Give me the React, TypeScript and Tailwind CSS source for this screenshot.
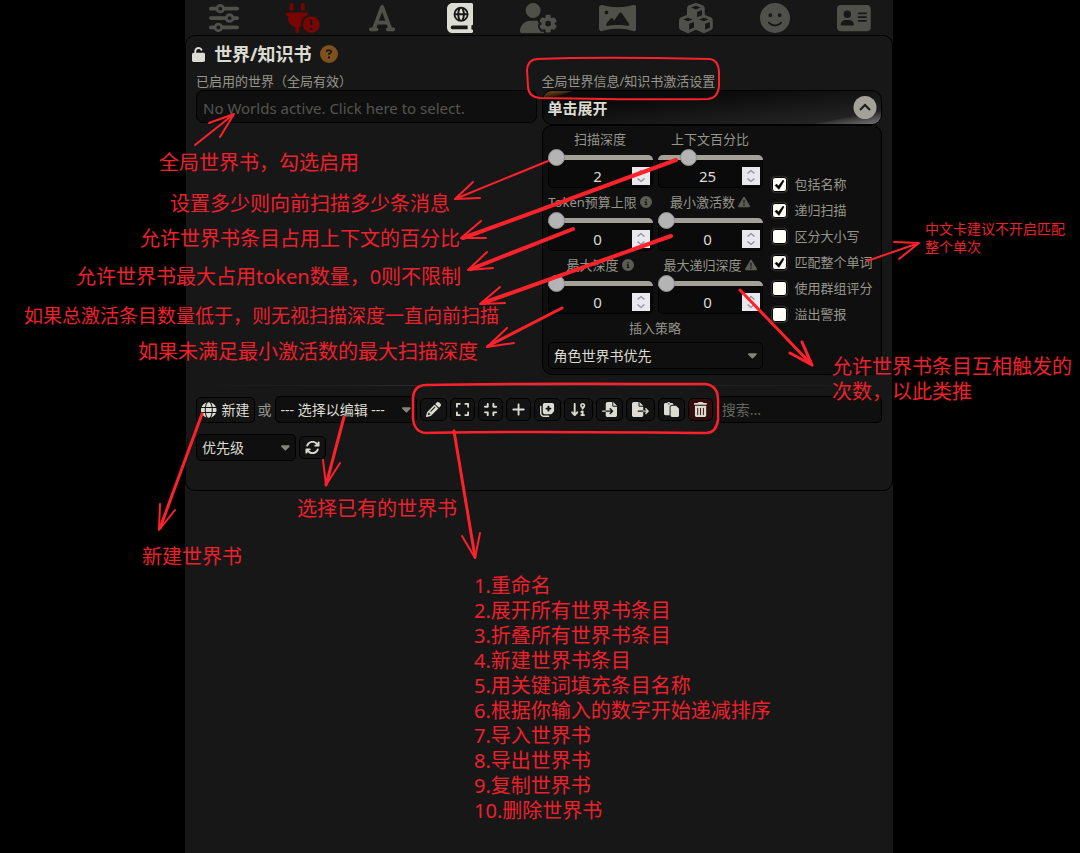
import type { ReactNode } from "react";
import { IconContext, type IconType } from "react-icons";
import {
  FaAddressCard,
  FaArrowDown91,
  FaArrowsRotate,
  FaBookAtlas,
  FaCaretDown,
  FaCircleInfo,
  FaCircleQuestion,
  FaCompress,
  FaCubes,
  FaExpand,
  FaFaceSmile,
  FaFileExport,
  FaFileImport,
  FaFont,
  FaNotesMedical,
  FaPanorama,
  FaPaste,
  FaPencil,
  FaPlugCircleExclamation,
  FaPlus,
  FaSliders,
  FaTrashCan,
  FaTriangleExclamation,
  FaUnlock,
  FaUserGear,
} from "react-icons/fa6";
import { FaGlobe } from "react-icons/fa";

const navItems: { label: string; icon: IconType; color: string }[] = [
  { label: "AI 响应配置", icon: FaSliders, color: "text-[#50504b]" },
  { label: "API 连接", icon: FaPlugCircleExclamation, color: "text-[#780404]" },
  { label: "高级格式化", icon: FaFont, color: "text-[#50504b]" },
  { label: "世界书", icon: FaBookAtlas, color: "text-[#dcdcd2]" },
  { label: "用户设置", icon: FaUserGear, color: "text-[#50504b]" },
  { label: "背景", icon: FaPanorama, color: "text-[#50504b]" },
  { label: "扩展", icon: FaCubes, color: "text-[#50504b]" },
  { label: "用户角色", icon: FaFaceSmile, color: "text-[#50504b]" },
  { label: "角色管理", icon: FaAddressCard, color: "text-[#50504b]" },
];

const sliders: { id: string; label: string; value: number; max: number; icon?: IconType }[] = [
  { id: "depth", label: "扫描深度", value: 2, max: 1000 },
  { id: "context", label: "上下文百分比", value: 25, max: 100 },
  { id: "budget", label: "Token预算上限", value: 0, max: 1000, icon: FaCircleInfo },
  { id: "min-activations", label: "最小激活数", value: 0, max: 100, icon: FaTriangleExclamation },
  { id: "max-depth", label: "最大深度", value: 0, max: 100, icon: FaCircleInfo },
  { id: "recursion", label: "最大递归深度", value: 0, max: 100, icon: FaTriangleExclamation },
];

const checks = [
  { label: "包括名称", checked: true },
  { label: "递归扫描", checked: true },
  { label: "区分大小写", checked: false },
  { label: "匹配整个单词", checked: true },
  { label: "使用群组评分", checked: false },
  { label: "溢出警报", checked: false },
];

const actions: { label: string; icon: IconType; danger?: boolean }[] = [
  { label: "重命名", icon: FaPencil },
  { label: "展开所有条目", icon: FaExpand },
  { label: "折叠所有条目", icon: FaCompress },
  { label: "新建条目", icon: FaPlus },
  { label: "填充条目名称", icon: FaNotesMedical },
  { label: "应用排序", icon: FaArrowDown91 },
  { label: "导入", icon: FaFileImport },
  { label: "导出", icon: FaFileExport },
  { label: "复制", icon: FaPaste },
  { label: "删除", icon: FaTrashCan, danger: true },
];

const arrows = [
  { width: 2, d: "M195 145L234 114M209 123L234 114L220 137" },
  { width: 2, d: "M548 161L455 199M473 182L455 199L480 198" },
  { width: 4, d: "M676 160L463 238" },
  { width: 2, d: "M481 221L461 238L486 238" },
  { width: 4, d: "M573 229L471 269" },
  { width: 2, d: "M487 252L468 270L493 268" },
  { width: 4, d: "M671 236L483 303" },
  { width: 2, d: "M500 287L480 304L505 303" },
  { width: 3, d: "M562 308L488 346" },
  { width: 2, d: "M507 328L487 347L514 343" },
  { width: 3, d: "M740 290L812 365M802 342L812 365L790 353" },
  { width: 2, d: "M867 261L919 243M894 242L919 243L899 259" },
  { width: 3, d: "M202 414L160 528" },
  { width: 2, d: "M160 504L159 530L175 510" },
  { width: 3, d: "M344 417L326 485" },
  { width: 2, d: "M323 460L326 485L340 463" },
  { width: 3, d: "M454 431L475 557" },
  { width: 2, d: "M462 536L475 558L480 533" },
];

const notes = [
  { text: "全局世界书，勾选启用", place: "left-[159px] top-[150px]" },
  { text: "设置多少则向前扫描多少条消息", place: "left-[170px] top-[191px]" },
  { text: "允许世界书条目占用上下文的百分比", place: "left-[140px] top-[226px]" },
  { text: "允许世界书最大占用token数量，0则不限制", place: "left-[76px] top-[264px]" },
  { text: "如果未满足最小激活数的最大扫描深度", place: "left-[138px] top-[339px]" },
  { text: "选择已有的世界书", place: "left-[297px] top-[496px]" },
  { text: "新建世界书", place: "left-[142px] top-[544px]" },
];

const steps = [
  "1.重命名",
  "2.展开所有世界书条目",
  "3.折叠所有世界书条目",
  "4.新建世界书条目",
  "5.用关键词填充条目名称",
  "6.根据你输入的数字开始递减排序",
  "7.导入世界书",
  "8.导出世界书",
  "9.复制世界书",
  "10.删除世界书",
];

function Select({ label, value, className }: { label: string; value: string; className: string }) {
  return (
    <div className={`relative ${className}`}>
      <select
        aria-label={label}
        className="block h-[27px] w-full appearance-none rounded-[5px] border border-black bg-[#0f0f0f] pl-[5px] pr-5 text-sm leading-5 text-[#dcdcd2]"
      >
        <option>{value}</option>
      </select>
      <FaCaretDown className="pointer-events-none absolute right-[6px] top-[6px] h-[14px] w-auto text-[#85857f]" />
    </div>
  );
}

function IconButton({ label, danger, children }: { label: string; danger?: boolean; children: ReactNode }) {
  return (
    <button
      type="button"
      aria-label={label}
      className={`flex h-[23px] shrink-0 items-center rounded-[5px] border border-black px-[5px] text-[#dcdcd2] ${
        danger ? "bg-[#330d0d]" : "bg-[#131313]"
      }`}
    >
      {children}
    </button>
  );
}

function SliderField({ id, label, value, max, icon: Icon }: (typeof sliders)[number]) {
  return (
    <div className="min-w-0">
      <label htmlFor={id} className="flex h-5 items-center justify-center gap-[3px] whitespace-nowrap">
        {label}
        {Icon && <Icon className="h-3 w-auto shrink-0 text-[#5c5c57]" />}
      </label>
      <input
        type="range"
        aria-label={label}
        min={0}
        max={max}
        defaultValue={value}
        className="relative z-10 mt-[6px] block h-[5px] w-full appearance-none rounded-t-[5px] bg-[#a3a299] [&::-webkit-slider-thumb]:size-[17px] [&::-webkit-slider-thumb]:appearance-none [&::-webkit-slider-thumb]:rounded-full [&::-webkit-slider-thumb]:border [&::-webkit-slider-thumb]:border-[#8c8c8c] [&::-webkit-slider-thumb]:bg-[#b4b4b4]"
      />
      <div className="relative">
        <input
          id={id}
          type="number"
          defaultValue={value}
          className="block h-7 w-full appearance-none rounded-b-[5px] border border-t-0 border-black bg-[#0a0a0a] pr-[5px] pt-1 text-center text-[15px] leading-5 text-[#dcdcd2] [-moz-appearance:textfield] [&::-webkit-inner-spin-button]:appearance-none"
        />
        <svg viewBox="0 0 18 18" className="absolute right-[3px] top-[7px] size-[18px] bg-[#e9e9ed]">
          <path d="M5.500 6.500L9 3.500l3.500 3M5.500 11.500l3.500 3 3.500-3" fill="none" stroke="#8f8f9d" strokeWidth="1.300" />
        </svg>
      </div>
    </div>
  );
}

function Annotations() {
  return (
    <div className="pointer-events-none absolute left-1/2 top-0 z-20 h-[853px] w-[1080px] -translate-x-1/2 text-[20px] leading-[25px] text-[#ee202c]">
      <svg viewBox="0 0 1080 853" className="absolute inset-0 size-full" fill="none" stroke="#fc222c" strokeLinecap="round" strokeLinejoin="round">
        <path
          strokeWidth="2"
          d="M537 59C590 57 660 58 710 59Q718 60 719 71V86Q718 98 708 99C650 100 590 99 540 98Q528 97 528 86L527 70Q528 59 538 59"
        />
        <path
          strokeWidth="2.500"
          d="M426 385C510 383 620 384 706 384Q718 386 718 400V420Q716 433 706 433C600 432 500 431 426 433Q414 432 413 418V398Q414 385 426 385"
        />
        {arrows.map((arrow) => (
          <path key={arrow.d} d={arrow.d} strokeWidth={arrow.width} />
        ))}
      </svg>

      {notes.map((note) => (
        <p key={note.text} className={`absolute whitespace-nowrap ${note.place}`}>
          {note.text}
        </p>
      ))}
      <p className="absolute left-[24px] top-[304px] whitespace-nowrap text-[19px]">
        如果总激活条目数量低于，则无视扫描深度一直向前扫描
      </p>
      <p className="absolute left-[925px] top-[220px] whitespace-nowrap text-sm leading-[18px]">
        中文卡建议不开启匹配
        <br />
        整个单次
      </p>
      <p className="absolute left-[832px] top-[354px] whitespace-nowrap">
        允许世界书条目互相触发的
        <br />
        次数，以此类推
      </p>
      <ol className="absolute left-[474px] top-[573px] whitespace-nowrap">
        {steps.map((step) => (
          <li key={step}>{step}</li>
        ))}
      </ol>
    </div>
  );
}

export default function App() {
  return (
    // a relative size keeps every icon at its own aspect ratio
    <IconContext.Provider value={{ size: "100%" }}>
      <div className="relative min-h-screen overflow-hidden bg-black pr-[2px] font-['Noto_Sans','Noto_Sans_CJK_SC',sans-serif] text-[13px] leading-5 text-[#96958c]">
        <div className="mx-auto min-h-screen w-full max-w-[708px] bg-[#171717]">
          <nav className="grid h-[35px] grid-cols-9">
            {navItems.map(({ label, icon: Icon, color }) => (
              <button key={label} type="button" aria-label={label} className={`flex items-center justify-center ${color}`}>
                <Icon className="h-[30px] w-auto" />
              </button>
            ))}
          </nav>

          <main className="rounded-[10px] border border-black px-[10px] pb-[29px]">
            {/* Title */}
            <div className="-ml-1 flex h-9 items-center">
              <FaUnlock className="h-[15px] w-auto text-[#dcdcd2]" />
              <h1 className="ml-[9px] text-lg font-bold text-[#dcdcd2]">世界/知识书</h1>
              <button type="button" aria-label="帮助" className="ml-2 text-[#80501c]">
                <FaCircleQuestion className="size-[18px]" />
              </button>
            </div>

            <div className="grid grid-cols-2 gap-[5px]">
              {/* Active worlds */}
              <div>
                <label htmlFor="worlds" className="block h-[18px] leading-[18px]">
                  已启用的世界（全局有效）
                </label>
                <input
                  id="worlds"
                  placeholder="No Worlds active. Click here to select."
                  className="block h-[33px] w-full rounded-[7px] border border-black bg-[#0f0f0f] px-[6px] pt-[2px] text-[15px] placeholder:text-[#555550]"
                />
              </div>

              {/* Activation settings */}
              <section>
                <h2 className="h-[18px] leading-[18px]">全局世界信息/知识书激活设置</h2>
                <button
                  type="button"
                  className="relative flex h-[35px] w-full items-center justify-between overflow-hidden rounded-[10px] border border-black bg-linear-to-br from-[#0b0b0b] from-30% to-[#292929] pl-[5px] pr-1 text-[15px] font-bold text-[#dcdcd2]"
                >
                  <span className="absolute inset-0 bg-[linear-gradient(170deg,#8a5312_0%,transparent_10%)] [clip-path:polygon(0_0,30px_0,0_10px)]" />
                  <span className="absolute inset-0 bg-[linear-gradient(170deg,transparent_85%,#777_100%)] [clip-path:polygon(100%_60%,100%_100%,80%_100%)]" />
                  <span className="relative">单击展开</span>
                  <svg viewBox="0 0 24 24" className="relative size-6">
                    <circle cx="12" cy="11.500" r="11.500" fill="#a3a299" />
                    <path d="M7 14l5-5 5 5" fill="none" stroke="#1b1b1b" strokeWidth="2" />
                  </svg>
                </button>

                <div className="flex gap-[9px] rounded-[10px] border border-black bg-[#0f0f0f] px-[5px] pb-[5px] pt-[3px]">
                  <div className="w-[215px]">
                    <div className="grid grid-cols-2 gap-x-[5px] gap-y-1">
                      {sliders.map((slider) => (
                        <SliderField key={slider.id} {...slider} />
                      ))}
                    </div>
                    <p className="mt-1 h-6 text-center">插入策略</p>
                    <Select label="插入策略" value="角色世界书优先" className="w-full" />
                  </div>

                  <div className="flex flex-col justify-center">
                    {checks.map((check) => (
                      <label key={check.label} className="flex h-[26px] items-center gap-2 whitespace-nowrap">
                        <span className="relative size-[15px]">
                          <input
                            type="checkbox"
                            defaultChecked={check.checked}
                            className="peer block size-[15px] appearance-none rounded-[3px] border border-black bg-[#fffff5] shadow-[0_0_2px_#777]"
                          />
                          <svg viewBox="0 0 15 15" className="pointer-events-none absolute inset-0 hidden peer-checked:block">
                            <path d="M3 8.500l1.500-1.500 2 2L11 3l1 1-5 8.500z" fill="#000" stroke="#000" strokeWidth="0.500" />
                          </svg>
                        </span>
                        {check.label}
                      </label>
                    ))}
                  </div>
                </div>
              </section>
            </div>

            <hr className="mt-[10px] h-px border-0 bg-linear-to-r from-transparent via-[#333] to-transparent" />

            {/* Editor toolbar */}
            <div className="mt-[10px] flex flex-wrap items-center gap-[3px] gap-y-[11px]">
              <button
                type="button"
                className="flex h-[26px] items-center gap-[5px] rounded-[5px] border border-black bg-[#131313] px-1 text-sm text-[#dcdcd2]"
              >
                <FaGlobe className="h-4 w-auto" />
                新建
              </button>
              <span className="text-sm">或</span>
              <Select label="世界书" value="--- 选择以编辑 ---" className="w-[142px]" />
              {actions.map(({ label, icon: Icon, danger }) => (
                <IconButton key={label} label={label} danger={danger}>
                  <Icon className="h-[15px] w-auto" />
                </IconButton>
              ))}
              <input
                type="search"
                aria-label="搜索"
                placeholder="搜索..."
                className="h-[27px] w-0 min-w-[120px] flex-1 rounded-[5px] border border-black bg-[#0f0f0f] px-[5px] text-sm placeholder:text-[#666661]"
              />
              <div className="flex w-full items-center gap-[3px]">
                <Select label="排序" value="优先级" className="w-[100px]" />
                <IconButton label="刷新">
                  <FaArrowsRotate className="h-[15px] w-auto" />
                </IconButton>
              </div>
            </div>
          </main>
        </div>

        <Annotations />
      </div>
    </IconContext.Provider>
  );
}
